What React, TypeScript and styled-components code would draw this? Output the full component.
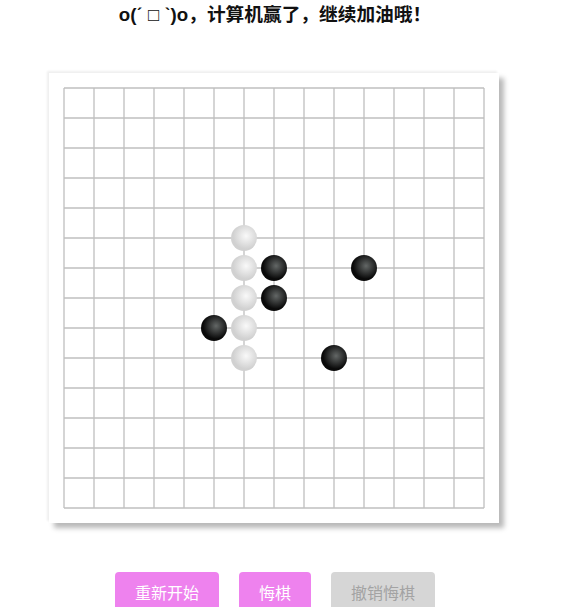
import styled, { createGlobalStyle } from "styled-components";

const GlobalStyle = createGlobalStyle`
  html, body {
    margin: 0;
    padding: 0;
    background: #ffffff;
    overflow: hidden;
  }
  body {
    font-family: "Liberation Sans", "Noto Sans CJK SC", sans-serif;
  }
`;

const CELL = 30;
const SIZE = 15;

type Stone = { x: number; y: number; black: boolean };

const stones: Stone[] = [
  { x: 6, y: 5, black: false },
  { x: 6, y: 6, black: false },
  { x: 6, y: 7, black: false },
  { x: 6, y: 8, black: false },
  { x: 6, y: 9, black: false },
  { x: 7, y: 6, black: true },
  { x: 7, y: 7, black: true },
  { x: 5, y: 8, black: true },
  { x: 10, y: 6, black: true },
  { x: 9, y: 9, black: true },
];

const Board = () => {
  const lines = Array.from({ length: SIZE }, (_, i) => 15 + i * CELL);
  return (
    <BoardBox>
      <svg width="450" height="450" viewBox="0 0 450 450">
        <defs>
          <radialGradient id="blackStone" cx="0.58" cy="0.42" r="0.5" fx="0.58" fy="0.42">
            <stop offset="0" stopColor="#636766" />
            <stop offset="1" stopColor="#0a0a0a" />
          </radialGradient>
          <radialGradient id="whiteStone" cx="0.58" cy="0.42" r="0.5" fx="0.58" fy="0.42">
            <stop offset="0" stopColor="#f9f9f9" />
            <stop offset="1" stopColor="#d1d1d1" />
          </radialGradient>
        </defs>
        {/* canvas-style lines on whole pixels, so they spread over two columns */}
        {lines.map((p) => (
          <g key={p} stroke="#bfbfbf" strokeWidth="1.3">
            <line x1={p} y1={15} x2={p} y2={435} />
            <line x1={15} y1={p} x2={435} y2={p} />
          </g>
        ))}
        {stones.map((s) => (
          <circle
            key={`${s.x}-${s.y}`}
            cx={15 + s.x * CELL}
            cy={15 + s.y * CELL}
            r="13"
            fill={s.black ? "url(#blackStone)" : "url(#whiteStone)"}
          />
        ))}
      </svg>
    </BoardBox>
  );
};

const App = () => {
  return (
    <>
      <GlobalStyle />
      <Page>
        <Title>o(ˊ □ ˋ)o，计算机赢了，继续加油哦！</Title>
        <Board />
        <ButtonRow>
          <ActionButton>重新开始</ActionButton>
          <ActionButton>悔棋</ActionButton>
          <ActionButton disabled>撤销悔棋</ActionButton>
        </ButtonRow>
      </Page>
    </>
  );
};

const Page = styled.div`
  width: 550px;
  display: flex;
  flex-direction: column;
  align-items: center;
`;

const Title = styled.h3`
  margin: 2px 0 0;
  font-size: 18.7px;
  line-height: 26px;
  font-weight: 700;
  color: #111111;
  font-family: "Liberation Sans", "Noto Sans CJK SC", sans-serif;
`;

const BoardBox = styled.div`
  width: 450px;
  height: 450px;
  margin-top: 45px;
  margin-left: -2px;
  background: #ffffff;
  box-shadow: -2px -2px 2px #efefef, 5px 5px 5px #b9b9b9;

  svg {
    display: block;
  }
`;

const ButtonRow = styled.div`
  display: flex;
  gap: 20px;
  margin-top: 49px;
`;

const ActionButton = styled.button`
  height: 40px;
  padding: 0 20px;
  border: none;
  border-radius: 4px;
  background: ${(p) => (p.disabled ? "#d6d6d6" : "#ee82ee")};
  color: ${(p) => (p.disabled ? "#a3a3a3" : "#ffffff")};
  font-family: "Noto Sans CJK SC", sans-serif;
  font-size: 16px;
  line-height: 40px;
`;

export default App;
